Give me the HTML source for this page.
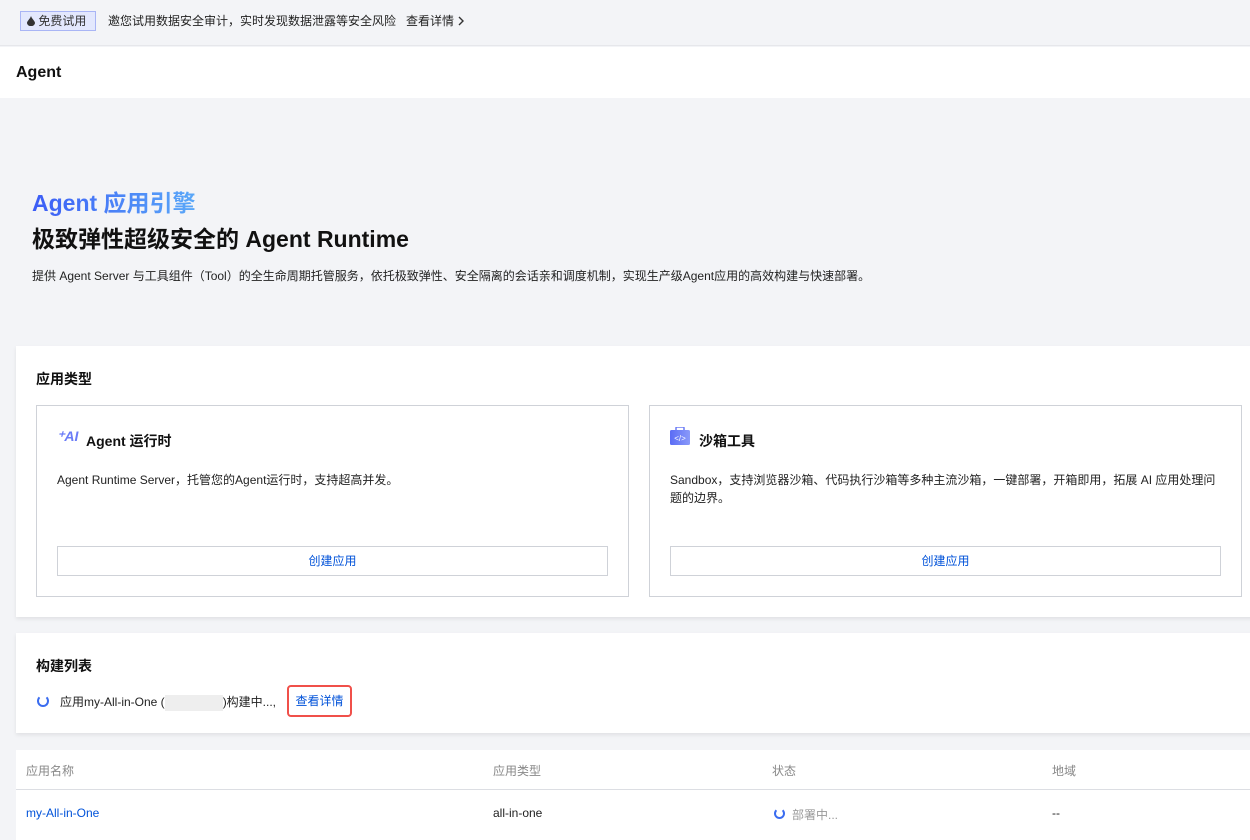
<!DOCTYPE html>
<html><head><meta charset="utf-8"><style>
*{margin:0;padding:0;box-sizing:border-box}
body{width:1250px;height:831px;overflow:hidden;background:#f3f4f7;font-family:"Liberation Sans","Noto Sans CJK SC",sans-serif;color:#111;position:relative}
.abs{position:absolute}
.banner{left:0;top:0;width:1250px;height:46px;background:#f3f4f7;border-bottom:1px solid #e6e7eb}
.tag{left:20px;top:11px;width:76px;height:20px;border:1px solid #a9b5f5;background:#e3e8fd;font-size:12px;line-height:18px;color:#333;padding-left:6px}
.header{left:0;top:47px;width:1250px;height:51px;background:#fff}
.card{background:#fff;box-shadow:0 2px 4px rgba(0,0,0,.08)}
.box{border:1px solid #cfd2d8;background:#fff}
.btn{border:1px solid #cfd2d8;height:30px;text-align:center;line-height:28px;font-size:12px;color:#0052d9}
.t12{font-size:12px;color:#222}
</style></head><body>
<div class="abs banner"></div>
<div class="abs tag"><svg width="8" height="10" viewBox="0 0 8 10" style="vertical-align:-1px"><path d="M4 0 C5 3 8 5 8 7 A4 3.2 0 0 1 0 7 C0 5 3 3 4 0Z" fill="#333"/></svg> 免费试用</div>
<div class="abs t12" style="left:108px;top:12px;line-height:18px;color:#222">邀您试用数据安全审计，实时发现数据泄露等安全风险&nbsp;&nbsp;&nbsp;查看详情 <svg width="8" height="10" viewBox="0 0 8 10" style="vertical-align:-1px"><path d="M2 1 L6 5 L2 9" fill="none" stroke="#333" stroke-width="1.4"/></svg></div>
<div class="abs header"></div>
<div class="abs" style="left:16px;top:64px;font-size:16px;font-weight:bold">Agent</div>

<div class="abs" style="left:32px;top:184px;font-size:23px;font-weight:bold;background:linear-gradient(90deg,#3b5cf6,#5aa8f8);-webkit-background-clip:text;color:transparent">Agent 应用引擎</div>
<div class="abs" style="left:32px;top:220px;font-size:23px;font-weight:bold;color:#111">极致弹性超级安全的 Agent Runtime</div>
<div class="abs t12" style="left:32px;top:267px">提供 Agent Server 与工具组件（Tool）的全生命周期托管服务，依托极致弹性、安全隔离的会话亲和调度机制，实现生产级Agent应用的高效构建与快速部署。</div>

<div class="abs card" style="left:16px;top:346px;width:1240px;height:271px"></div>
<div class="abs" style="left:36px;top:369px;font-size:14px;font-weight:bold">应用类型</div>
<div class="abs box" style="left:36px;top:405px;width:593px;height:192px"></div>
<div class="abs" style="left:57px;top:428px;font-size:14px;font-weight:bold;font-style:italic;color:#6a7cf7">⁺AI</div>
<div class="abs" style="left:86px;top:431px;font-size:14px;font-weight:bold">Agent 运行时</div>
<div class="abs t12" style="left:57px;top:471px">Agent Runtime Server，托管您的Agent运行时，支持超高并发。</div>
<div class="abs btn" style="left:57px;top:546px;width:551px">创建应用</div>

<div class="abs box" style="left:649px;top:405px;width:593px;height:192px"></div>
<svg class="abs" style="left:670px;top:427px" width="20" height="18" viewBox="0 0 20 18"><defs><linearGradient id="g" x1="0" x2="1"><stop offset="0" stop-color="#5b6cf5"/><stop offset="1" stop-color="#8a9af9"/></linearGradient></defs><rect x="6" y="0" width="8" height="4" rx="1" fill="none" stroke="#6c7cf6" stroke-width="1.5"/><rect x="0" y="3" width="20" height="15" rx="1.5" fill="url(#g)"/><text x="10" y="14" font-size="8" fill="#fff" text-anchor="middle" font-family="Liberation Sans">&lt;/&gt;</text></svg>
<div class="abs" style="left:699px;top:431px;font-size:14px;font-weight:bold">沙箱工具</div>
<div class="abs t12" style="left:670px;top:471px;width:556px;line-height:18px">Sandbox，支持浏览器沙箱、代码执行沙箱等多种主流沙箱，一键部署，开箱即用，拓展 AI 应用处理问题的边界。</div>
<div class="abs btn" style="left:670px;top:546px;width:551px">创建应用</div>

<div class="abs card" style="left:16px;top:633px;width:1240px;height:100px"></div>
<div class="abs" style="left:36px;top:656px;font-size:14px;font-weight:bold">构建列表</div>
<div class="abs" style="left:37px;top:695px;width:12px;height:12px;border:2px solid #3a6cf0;border-top-color:transparent;border-radius:50%"></div>
<div class="abs t12" style="left:60px;top:693px">应用my-All-in-One (<span style="display:inline-block;width:58px;height:16px;background:#eee;vertical-align:middle"></span>)构建中...,</div>
<div class="abs" style="left:287px;top:685px;width:65px;height:32px;border:2px solid #f0504a;border-radius:4px;font-size:12px;color:#0052d9;line-height:28px;text-align:center">查看详情</div>

<div class="abs" style="left:16px;top:750px;width:1240px;height:90px;background:#fff"></div>
<div class="abs" style="left:16px;top:789px;width:1240px;height:1px;background:#dcdee3"></div>
<div class="abs t12" style="left:26px;top:762px;color:#888">应用名称</div>
<div class="abs t12" style="left:493px;top:762px;color:#888">应用类型</div>
<div class="abs t12" style="left:772px;top:762px;color:#888">状态</div>
<div class="abs t12" style="left:1052px;top:762px;color:#888">地域</div>
<div class="abs t12" style="left:26px;top:806px;color:#0052d9">my-All-in-One</div>
<div class="abs t12" style="left:493px;top:806px">all-in-one</div>
<div class="abs" style="left:774px;top:808px;width:11px;height:11px;border:2px solid #3a6cf0;border-top-color:transparent;border-radius:50%"></div>
<div class="abs t12" style="left:792px;top:806px;color:#999">部署中...</div>
<div class="abs t12" style="left:1052px;top:806px">--</div>
</body></html>
